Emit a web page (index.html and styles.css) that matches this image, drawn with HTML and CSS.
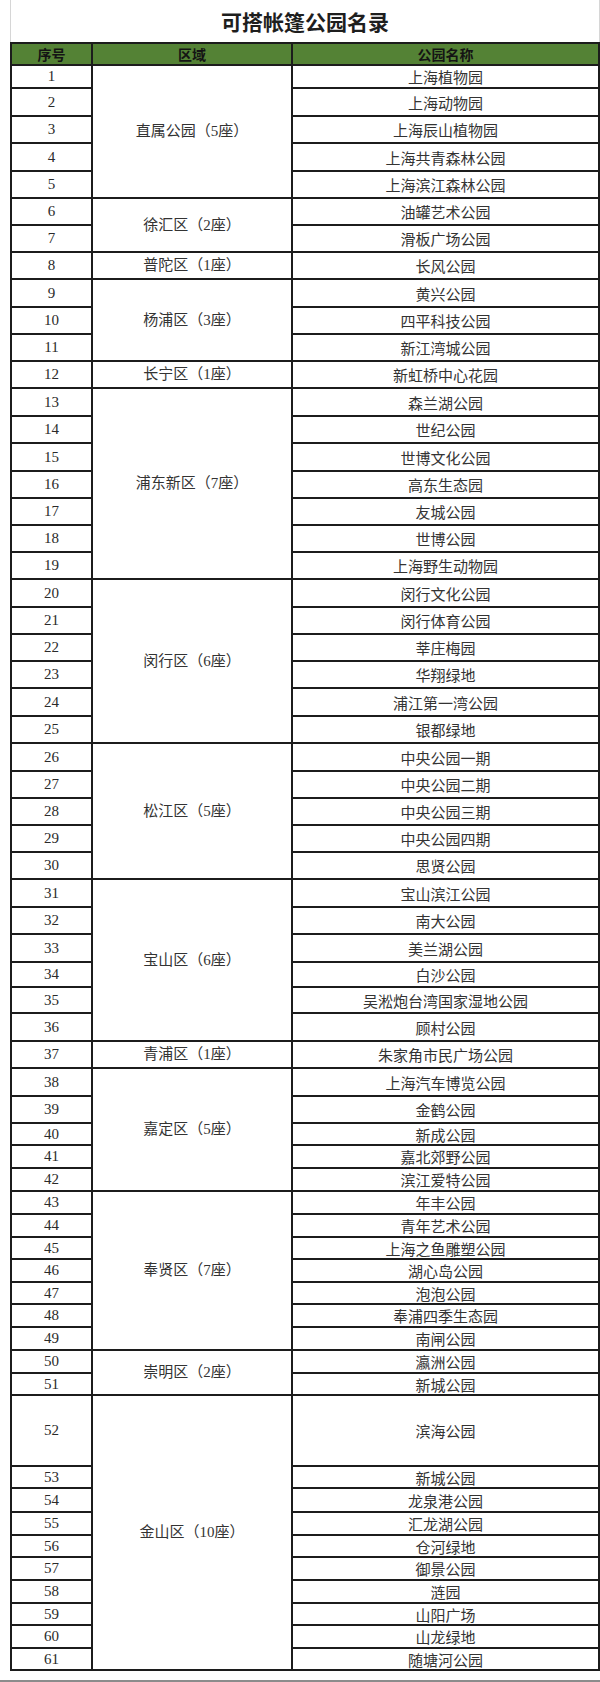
FILE: index.html
```html
<!DOCTYPE html>
<html lang="zh-CN">
<head>
<meta charset="utf-8">
<title>可搭帐篷公园名录</title>
<link rel="stylesheet" href="styles.css">
</head>
<body>
<div class="sheet">
  <div class="title">可搭帐篷公园名录</div>
  <table class="parks">
    <colgroup><col class="c-no"><col class="c-area"><col class="c-name"></colgroup>
    <thead>
      <tr class="h22"><th>序号</th><th>区域</th><th>公园名称</th></tr>
    </thead>
    <tbody>
      <tr class="h23"><td class="no">1</td><td class="area" rowspan="5">直属公园（5座）</td><td>上海植物园</td></tr>
      <tr class="h28"><td class="no">2</td><td>上海动物园</td></tr>
      <tr class="h27"><td class="no">3</td><td>上海辰山植物园</td></tr>
      <tr class="h28"><td class="no">4</td><td>上海共青森林公园</td></tr>
      <tr class="h27"><td class="no">5</td><td>上海滨江森林公园</td></tr>
      <tr class="h27"><td class="no">6</td><td class="area" rowspan="2">徐汇区（2座）</td><td>油罐艺术公园</td></tr>
      <tr class="h27"><td class="no">7</td><td>滑板广场公园</td></tr>
      <tr class="h27"><td class="no">8</td><td class="area">普陀区（1座）</td><td>长风公园</td></tr>
      <tr class="h28"><td class="no">9</td><td class="area" rowspan="3">杨浦区（3座）</td><td>黄兴公园</td></tr>
      <tr class="h27"><td class="no">10</td><td>四平科技公园</td></tr>
      <tr class="h27"><td class="no">11</td><td>新江湾城公园</td></tr>
      <tr class="h27"><td class="no">12</td><td class="area">长宁区（1座）</td><td>新虹桥中心花园</td></tr>
      <tr class="h28"><td class="no">13</td><td class="area" rowspan="7">浦东新区（7座）</td><td>森兰湖公园</td></tr>
      <tr class="h27"><td class="no">14</td><td>世纪公园</td></tr>
      <tr class="h28"><td class="no">15</td><td>世博文化公园</td></tr>
      <tr class="h27"><td class="no">16</td><td>高东生态园</td></tr>
      <tr class="h27"><td class="no">17</td><td>友城公园</td></tr>
      <tr class="h27"><td class="no">18</td><td>世博公园</td></tr>
      <tr class="h27"><td class="no">19</td><td>上海野生动物园</td></tr>
      <tr class="h28"><td class="no">20</td><td class="area" rowspan="6">闵行区（6座）</td><td>闵行文化公园</td></tr>
      <tr class="h27"><td class="no">21</td><td>闵行体育公园</td></tr>
      <tr class="h27"><td class="no">22</td><td>莘庄梅园</td></tr>
      <tr class="h27"><td class="no">23</td><td>华翔绿地</td></tr>
      <tr class="h28"><td class="no">24</td><td>浦江第一湾公园</td></tr>
      <tr class="h27"><td class="no">25</td><td>银都绿地</td></tr>
      <tr class="h28"><td class="no">26</td><td class="area" rowspan="5">松江区（5座）</td><td>中央公园一期</td></tr>
      <tr class="h27"><td class="no">27</td><td>中央公园二期</td></tr>
      <tr class="h27"><td class="no">28</td><td>中央公园三期</td></tr>
      <tr class="h27"><td class="no">29</td><td>中央公园四期</td></tr>
      <tr class="h27"><td class="no">30</td><td>思贤公园</td></tr>
      <tr class="h28"><td class="no">31</td><td class="area" rowspan="6">宝山区（6座）</td><td>宝山滨江公园</td></tr>
      <tr class="h27"><td class="no">32</td><td>南大公园</td></tr>
      <tr class="h28"><td class="no">33</td><td>美兰湖公园</td></tr>
      <tr class="h25"><td class="no">34</td><td>白沙公园</td></tr>
      <tr class="h26 thin-top"><td class="no">35</td><td>吴淞炮台湾国家湿地公园</td></tr>
      <tr class="h28"><td class="no">36</td><td>顾村公园</td></tr>
      <tr class="h27"><td class="no">37</td><td class="area">青浦区（1座）</td><td>朱家角市民广场公园</td></tr>
      <tr class="h28"><td class="no">38</td><td class="area" rowspan="5">嘉定区（5座）</td><td>上海汽车博览公园</td></tr>
      <tr class="h27"><td class="no">39</td><td>金鹤公园</td></tr>
      <tr class="h22"><td class="no">40</td><td>新成公园</td></tr>
      <tr class="h23"><td class="no">41</td><td>嘉北郊野公园</td></tr>
      <tr class="h23"><td class="no">42</td><td>滨江爱特公园</td></tr>
      <tr class="h23"><td class="no">43</td><td class="area" rowspan="7">奉贤区（7座）</td><td>年丰公园</td></tr>
      <tr class="h23"><td class="no">44</td><td>青年艺术公园</td></tr>
      <tr class="h22"><td class="no">45</td><td>上海之鱼雕塑公园</td></tr>
      <tr class="h23"><td class="no">46</td><td>湖心岛公园</td></tr>
      <tr class="h22"><td class="no">47</td><td>泡泡公园</td></tr>
      <tr class="h23"><td class="no">48</td><td>奉浦四季生态园</td></tr>
      <tr class="h23"><td class="no">49</td><td>南闸公园</td></tr>
      <tr class="h23"><td class="no">50</td><td class="area" rowspan="2">崇明区（2座）</td><td>瀛洲公园</td></tr>
      <tr class="h22"><td class="no">51</td><td>新城公园</td></tr>
      <tr class="h71"><td class="no">52</td><td class="area" rowspan="10">金山区（10座）</td><td>滨海公园</td></tr>
      <tr class="h22"><td class="no">53</td><td>新城公园</td></tr>
      <tr class="h24"><td class="no">54</td><td>龙泉港公园</td></tr>
      <tr class="h23"><td class="no">55</td><td>汇龙湖公园</td></tr>
      <tr class="h22"><td class="no">56</td><td>仓河绿地</td></tr>
      <tr class="h23"><td class="no">57</td><td>御景公园</td></tr>
      <tr class="h23"><td class="no">58</td><td>涟园</td></tr>
      <tr class="h22"><td class="no">59</td><td>山阳广场</td></tr>
      <tr class="h23"><td class="no">60</td><td>山龙绿地</td></tr>
      <tr class="h22"><td class="no">61</td><td>随塘河公园</td></tr>
    </tbody>
  </table>
</div>
<div class="bottom-rule"></div>
</body>
</html>
```

FILE: styles.css
```css
html, body {
  margin: 0;
  padding: 0;
  background: #ffffff;
}

body {
  width: 600px;
  font-family: "Liberation Serif", "Noto Sans CJK SC", serif;
  color: #2e2e2e;
}

.sheet {
  margin-left: 10px;
  width: 588px;
  border-left: 1px solid #d6d6d6;
  border-right: 1px solid #d6d6d6;
}

.title {
  height: 42px;
  display: flex;
  align-items: center;
  justify-content: center;
  font-family: "Noto Sans CJK SC", sans-serif;
  font-weight: 700;
  font-size: 21px;
  color: #1e1e1e;
  padding-bottom: 1px;
  box-sizing: border-box;
}

.parks {
  width: 588px;
  margin-left: -1px;
  border-collapse: collapse;
  table-layout: fixed;
  border: 2px solid #1c1c1c;
}

.c-no { width: 81px; }
.c-area { width: 200px; }
.c-name { width: 307px; }

.parks th,
.parks td {
  border: 2px solid #1c1c1c;
  padding: 0;
  text-align: center;
  vertical-align: middle;
  box-sizing: border-box;
  line-height: 1;
  font-size: 15px;
  font-weight: 400;
}

.parks th {
  background: #548235;
  color: #141414;
  font-family: "Noto Sans CJK SC", sans-serif;
  font-weight: 700;
  font-size: 14px;
}

.parks td {
  font-family: "Noto Sans CJK SC", sans-serif;
  color: #333333;
}

.parks td.no,
.parks td.area {
  font-family: "Liberation Serif", "Noto Sans CJK SC", serif;
}

.parks td.no {
  font-size: 15px;
  color: #2a2a2a;
}

.thin-top td {
  border-top: 1px solid #c4c4c4;
}

.h22 > * { height: 22px; }
.h23 > * { height: 23px; }
.h24 > * { height: 24px; }
.h25 > * { height: 25px; }
.h26 > * { height: 26px; }
.h27 > * { height: 27px; }
.h28 > * { height: 28px; }
.h71 > * { height: 71px; }

.bottom-rule {
  margin-top: 9px;
  height: 2px;
  background: #8c8c8c;
}
```
